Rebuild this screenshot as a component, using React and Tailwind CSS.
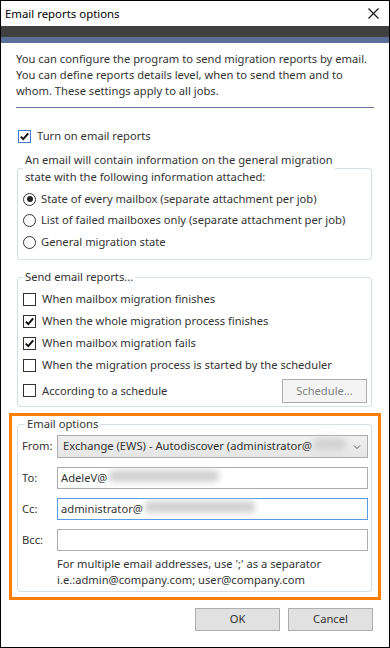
import React from "react";

function Check({ checked, focus }) {
    return (
        <span className={`w-[13px] h-[13px] border ${focus ? "border-[#3d7bd9]" : "border-[#333333]"} bg-white flex items-center justify-center shrink-0`}>
            {checked && (
                <svg width="11" height="11" viewBox="0 0 11 11">
                    <path d="M1.8 5.6 L4.3 8.1 L9.2 2.4" fill="none" stroke="#111" strokeWidth="2" />
                </svg>
            )}
        </span>
    );
}

function Radio({ on }) {
    return (
        <span className="w-[13px] h-[13px] rounded-full border border-[#333333] bg-white flex items-center justify-center shrink-0">
            {on && <span className="w-[6px] h-[6px] rounded-full bg-[#222]" />}
        </span>
    );
}

function Smudge({ w }) {
    return <span className="inline-block h-[12px] bg-[#d2d2d2] blur-[3px] rounded" style={{ width: w }} />;
}

export default function App() {
    const sendItems = [
        { label: "When mailbox migration finishes", checked: false },
        { label: "When the whole migration process finishes", checked: true },
        { label: "When mailbox migration fails", checked: true },
        { label: "When the migration process is started by the scheduler", checked: false },
    ];

    return (
        <div className="w-[390px] h-[648px] border border-black bg-white flex flex-col overflow-hidden font-['Noto_Sans',sans-serif] text-[11.2px] text-[#333]">
            {/* Title bar */}
            <div className="h-[25px] shrink-0 flex items-center justify-between pl-[4px] pr-[10px]">
                <span className="text-[11.4px] text-black">Email reports options</span>
                <svg width="11" height="11" viewBox="0 0 11 11">
                    <path d="M0.5 0.5 L10.5 10.5 M10.5 0.5 L0.5 10.5" stroke="#111" strokeWidth="1.1" />
                </svg>
            </div>
            <div className="h-[11px] shrink-0 bg-[#404040]" />
            <div className="h-[6px] shrink-0 bg-[#5b6f97]" />

            <div className="px-[15px]">
                <p className="mt-[8px] leading-[16px] whitespace-nowrap">
                    You can configure the program to send migration reports by email.<br />
                    You can define reports details level, when to send them and to<br />
                    whom. These settings apply to all jobs.
                </p>
                <div className="mt-[8px] h-px bg-[#66749c]" />

                <label className="mt-[20px] h-[16px] pl-[2px] flex items-center gap-[6px]">
                    <Check checked focus />
                    <span>Turn on email reports</span>
                </label>

                {/* Group 1 */}
                <fieldset className="mt-[8px] ml-px w-[355px] border border-[#d5dfe5] rounded-[3px] px-[5px] pb-[9px]">
                    <legend className="px-[2px] leading-[16.5px] whitespace-nowrap">
                        An email will contain information on the general migration<br />
                        state with the following information attached:
                    </legend>
                    <div className="mt-[6px] flex flex-col gap-[5.5px]">
                        {[
                            { label: "State of every mailbox (separate attachment per job)", on: true },
                            { label: "List of failed mailboxes only (separate attachment per job)", on: false },
                            { label: "General migration state", on: false },
                        ].map(r => (
                            <div key={r.label} className="h-[16px] flex items-center gap-[5px]">
                                <Radio on={r.on} />
                                <span className="whitespace-nowrap">{r.label}</span>
                            </div>
                        ))}
                    </div>
                </fieldset>

                {/* Group 2 */}
                <fieldset className="mt-[9px] ml-px w-[355px] border border-[#d5dfe5] rounded-[3px] pl-[5px] pr-[4px] pb-[3px]">
                    <legend className="px-[2px] leading-[16px]">Send email reports...</legend>
                    <div className="mt-[6px] flex flex-col gap-[6px]">
                        {sendItems.map(s => (
                            <div key={s.label} className="h-[16px] flex items-center gap-[6px]">
                                <Check checked={s.checked} />
                                <span className="whitespace-nowrap">{s.label}</span>
                            </div>
                        ))}
                        <div className="h-[24px] flex items-center justify-between">
                            <div className="flex items-center gap-[6px]">
                                <Check />
                                <span>According to a schedule</span>
                            </div>
                            <button className="w-[85px] h-[24px] border border-[#adadad] bg-[#f4f4f4] text-[#838383]">
                                Schedule...
                            </button>
                        </div>
                    </div>
                </fieldset>
            </div>

            {/* Email options (highlighted) */}
            <div className="mt-[6px] mx-[8px] border-[3px] border-[#ff7f00] pl-[5px] pr-[6px] pb-[5px]">
                <fieldset className="border border-[#d5dfe5] rounded-[3px] pl-[4px] pr-[3px] pb-[3px]">
                    <legend className="ml-[3px] px-[2px] leading-[16px]">Email options</legend>
                    <div className="mt-[3px] flex flex-col gap-[9px]">
                        <div className="flex items-center">
                            <span className="w-[35px] shrink-0">From:</span>
                            <div className="flex-1 h-[23px] border border-[#acacac] bg-gradient-to-b from-[#f0f0f0] to-[#e5e5e5] flex items-center pl-[5px] pr-[6px]">
                                <span className="whitespace-nowrap">Exchange (EWS) - Autodiscover (administrator@</span>
                                <span className="ml-[2px]"><Smudge w={32} /></span>
                                <svg className="ml-auto" width="8" height="6" viewBox="0 0 8 6">
                                    <path d="M1 1.5 L4 4.5 L7 1.5" fill="none" stroke="#555" strokeWidth="1" />
                                </svg>
                            </div>
                        </div>
                        <div className="flex items-center">
                            <span className="w-[35px] shrink-0">To:</span>
                            <div className="flex-1 h-[22px] border border-[#abadb3] bg-white flex items-center pl-[3px]">
                                <span>AdeleV@</span>
                                <span className="ml-[2px]"><Smudge w={110} /></span>
                            </div>
                        </div>
                        <div className="flex items-center">
                            <span className="w-[35px] shrink-0">Cc:</span>
                            <div className="flex-1 h-[22px] border border-[#569de5] bg-white flex items-center pl-[3px]">
                                <span>administrator@</span>
                                <span className="ml-[2px]"><Smudge w={110} /></span>
                            </div>
                        </div>
                        <div className="flex items-center">
                            <span className="w-[35px] shrink-0">Bcc:</span>
                            <div className="flex-1 h-[22px] border border-[#abadb3] bg-white" />
                        </div>
                    </div>
                    <p className="mt-[5px] ml-[35px] leading-[16px] whitespace-nowrap">
                        For multiple email addresses, use ';' as a separator<br />
                        i.e.:admin@company.com; user@company.com
                    </p>
                </fieldset>
            </div>

            {/* Footer buttons */}
            <div className="mt-[8px] pr-[16px] flex justify-end gap-[8px]">
                <button className="w-[85px] h-[23px] border border-[#adadad] bg-[#e1e1e1]">OK</button>
                <button className="w-[85px] h-[23px] border border-[#adadad] bg-[#e1e1e1]">Cancel</button>
            </div>
        </div>
    );
}
